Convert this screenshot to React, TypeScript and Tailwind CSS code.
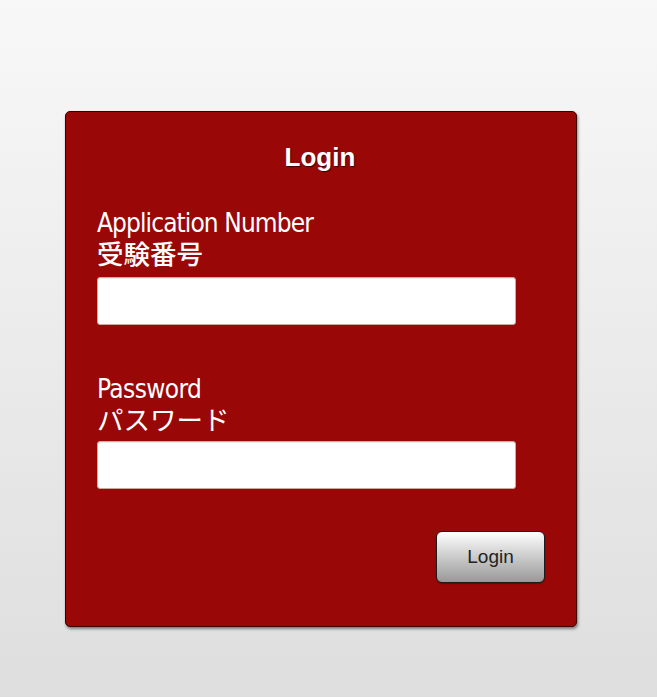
export default function App() {
  return (
    <div className="min-h-[697px] w-full bg-gradient-to-b from-[#f8f8f8] to-[#dedede] pt-[111px]">
      <div
        className="ml-[65px] w-[512px] h-[516px] rounded-[5px] border border-[#3a0000] bg-[#990707] shadow-[1px_2px_3px_rgba(0,0,0,0.45)] px-[31px] pt-[30px]"
        style={{ fontFamily: '"Liberation Sans", Arial, sans-serif' }}
      >
        <h1 className="text-center text-[26px] font-bold leading-[30px] text-white [text-shadow:1px_1px_1px_rgba(0,0,0,0.6)] pr-[2px]">
          Login
        </h1>

        <div className="mt-[37px] w-[419px]">
          <label className="block text-white">
            <span
              className="block text-[26px] leading-[29px] tracking-[-0.9px]"
              style={{ fontFamily: '"DejaVu Sans Condensed", "Noto Sans CJK JP", sans-serif' }}
            >
              Application Number
            </span>
            <span
              className="block text-[26.5px] leading-[29px] font-medium"
              style={{ fontFamily: '"Noto Sans CJK JP", sans-serif' }}
            >
              受験番号
            </span>
          </label>
          <input
            type="text"
            className="mt-[10px] block w-[419px] h-[48px] rounded-[3px] bg-white border border-[#c9a9a0] shadow-[inset_0_1px_1px_rgba(0,0,0,0.08)] outline-none"
          />
        </div>

        <div className="mt-[50px] w-[419px]">
          <label className="block text-white">
            <span
              className="block text-[26px] leading-[29px] tracking-[-0.6px]"
              style={{ fontFamily: '"DejaVu Sans Condensed", "Noto Sans CJK JP", sans-serif' }}
            >
              Password
            </span>
            <span
              className="block text-[26.5px] leading-[29px]"
              style={{ fontFamily: '"Noto Sans CJK JP", sans-serif' }}
            >
              パスワード
            </span>
          </label>
          <input
            type="password"
            className="mt-[8px] block w-[419px] h-[48px] rounded-[3px] bg-white border border-[#c9a9a0] shadow-[inset_0_1px_1px_rgba(0,0,0,0.08)] outline-none"
          />
        </div>

        <div className="mt-[42px] flex justify-end">
          <button
            type="button"
            className="w-[109px] h-[52px] rounded-[6px] border border-[#1c1c1c] bg-gradient-to-b from-[#ffffff] to-[#999999] text-[19px] text-[#222222] shadow-[0_1px_1px_rgba(0,0,0,0.3)]"
          >
            Login
          </button>
        </div>
      </div>
    </div>
  );
}
